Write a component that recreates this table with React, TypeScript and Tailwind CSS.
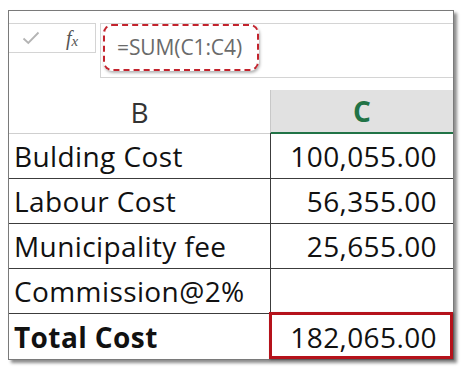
export default function App() {
  const rows = [
    { label: "Bulding Cost", value: "100,055.00" },
    { label: "Labour Cost", value: "56,355.00" },
    { label: "Municipality fee", value: "25,655.00" },
    { label: "Commission@2%", value: "" },
  ];

  return (
    <div
      className="w-[470px] h-[375px] bg-white pt-[10px] pl-[8px]"
      style={{ fontFamily: '"Open Sans", "Noto Sans", sans-serif' }}
    >
      {/* Sheet frame */}
      <div className="w-[446px] h-[350px] border border-[#7a7a7a] bg-white shadow-[3px_3px_3px_rgba(0,0,0,0.45)] flex flex-col">
        {/* Formula bar */}
        <div className="mt-[12px] h-[55px] flex">
          <div className="w-[87px] h-[30px] border-y border-r border-[#d4d4d4] flex items-center pl-[13px]">
            <svg width="18" height="14" viewBox="0 0 18 14" fill="none">
              <path d="M1.5 7.5 L6.3 12 L16.5 1.5" stroke="#b4b4b4" strokeWidth="1.8" />
            </svg>
            <span
              className="ml-[26px] flex items-end italic text-[#555] leading-none"
              style={{ fontFamily: '"Liberation Serif", serif' }}
            >
              <span className="text-[20px]">f</span>
              <span className="text-[15px] relative top-[1px]">x</span>
            </span>
          </div>
          <div className="ml-[4px] flex-1 border-y border-l border-[#d4d4d4]">
            <div className="ml-[2px] w-[156px] h-[47px] rounded-[9px] border-2 border-dashed border-[#c3232d] shadow-[1px_2px_3px_rgba(0,0,0,0.3)] flex items-center pl-[12px]">
              <span className="text-[21px] font-medium text-[#6a6a6a] tracking-[-0.1px]">=SUM(C1:C4)</span>
            </div>
          </div>
        </div>

        {/* Column headers */}
        <div className="mt-[12px] grid grid-cols-[261px_1fr] h-[43px]">
          <div className="border-b border-[#cfcfcf] flex items-center justify-center text-[28px] text-[#333]">
            B
          </div>
          <div className="bg-[#e1e1e1] border-l border-[#c8c8c8] border-b-2 border-b-[#217346] flex items-center justify-center text-[28px] font-bold text-[#217346]">
            C
          </div>
        </div>

        {/* Data rows */}
        {rows.map((r, i) => (
          <div
            key={r.label}
            className={`grid grid-cols-[261px_1fr] h-[45px] text-[28px] text-[#111] tracking-[0.4px] ${i > 0 ? "border-t border-[#3c3c3c]" : ""}`}
          >
            <div className="pl-[5px] flex items-center">{r.label}</div>
            <div className="border-l border-[#3c3c3c] flex items-center justify-end pr-[16px]">{r.value}</div>
          </div>
        ))}
        <div className="grid grid-cols-[261px_1fr] flex-1 border-t border-[#3c3c3c] text-[28px] text-[#111] tracking-[0.4px]">
          <div className="pl-[5px] flex items-center font-bold">Total Cost</div>
          <div className="relative border-l border-[#3c3c3c] flex items-center justify-end pr-[16px]">
            182,065.00
            <span className="absolute -left-[2px] -top-[2px] right-0 bottom-0 border-[3px] border-[#b5121b] shadow-[1px_1px_2px_rgba(0,0,0,0.35)]" />
          </div>
        </div>
      </div>
    </div>
  );
}
